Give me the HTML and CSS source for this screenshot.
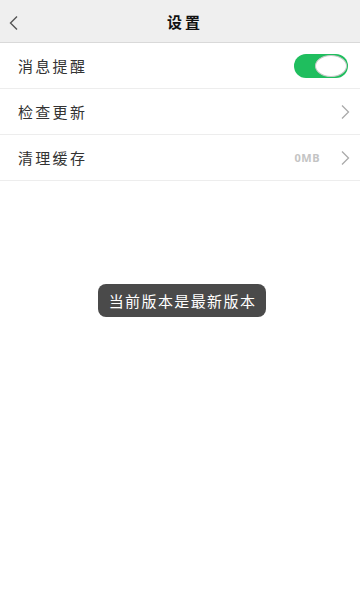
FILE: index.html
```html
<!DOCTYPE html>
<html lang="zh">
<head>
<meta charset="utf-8">
<link rel="stylesheet" href="styles.css">
</head>
<body>
<div class="page">
  <header class="header">
    <svg class="back" width="12" height="16" viewBox="0 0 12 16"><polyline points="9,1.5 2.5,8 9,14.5" fill="none" stroke="#555" stroke-width="1.4"/></svg>
    <div class="title">设置</div>
  </header>
  <div class="list">
    <div class="row">
      <span class="label">消息提醒</span>
      <div class="toggle"><div class="knob"></div></div>
    </div>
    <div class="row">
      <span class="label">检查更新</span>
      <svg class="chev" width="10" height="16" viewBox="0 0 10 16"><polyline points="2,1.5 8.5,8 2,14.5" fill="none" stroke="#aaa" stroke-width="1.3"/></svg>
    </div>
    <div class="row">
      <span class="label">清理缓存</span>
      <div class="right">
        <span class="value">0MB</span>
        <svg class="chev" width="10" height="16" viewBox="0 0 10 16"><polyline points="2,1.5 8.5,8 2,14.5" fill="none" stroke="#aaa" stroke-width="1.3"/></svg>
      </div>
    </div>
  </div>
  <div class="toast-wrap">
    <div class="toast">当前版本是最新版本</div>
  </div>
</div>
</body>
</html>
```
FILE: styles.css
```css
* { box-sizing: border-box; }
html, body { margin: 0; padding: 0; background: #fff; }
body { font-family: "Noto Sans CJK SC", "Noto Sans", sans-serif; color: #333; }
.page { width: 360px; height: 600px; display: flex; flex-direction: column; }
.header {
  height: 43px;
  background: #efefef;
  border-bottom: 1px solid #d9d9d9;
  display: flex;
  align-items: center;
  position: relative;
}
.back { position: absolute; left: 8px; top: 15px; }
.title {
  flex: 1;
  text-align: center;
  font-size: 15px;
  font-weight: 700;
  letter-spacing: 3px;
  padding-left: 10px;
  color: #111;
  line-height: 1;
}
.list { display: flex; flex-direction: column; }
.row {
  height: 46px;
  border-bottom: 1px solid #ededed;
  display: flex;
  align-items: center;
  justify-content: space-between;
  padding: 0 10px 0 18px;
}
.label { font-size: 15px; letter-spacing: 2.3px; color: #333; line-height: 1; }
.toggle {
  width: 54px;
  height: 24px;
  border-radius: 12px;
  background: #1fbe5e;
  display: flex;
  align-items: center;
  justify-content: flex-end;
  padding: 0 1px;
  margin-right: 2px;
}
.knob {
  width: 32px;
  height: 22px;
  border-radius: 50%;
  background: #fff;
  border: 1px solid #c8c8c8;
}
.right { display: flex; align-items: center; gap: 20px; }
.value { font-size: 11px; font-weight: 700; color: #c4c4c4; letter-spacing: 0.5px; font-family: "Noto Sans", sans-serif; }
.chev { display: block; }
.toast-wrap { display: flex; justify-content: center; margin-top: 103px; padding-left: 4px; }
.toast {
  height: 33px;
  padding: 0 10px 0 11px;
  background: #4a4a4a;
  color: #fff;
  border-radius: 8px;
  font-size: 15px;
  letter-spacing: 1.4px;
  display: flex;
  align-items: center;
}
```
